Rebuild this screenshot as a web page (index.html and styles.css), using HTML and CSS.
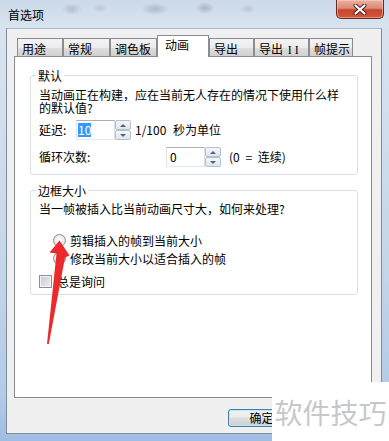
FILE: index.html
```html
<!DOCTYPE html>
<html lang="zh">
<head>
<meta charset="utf-8">
<title>首选项</title>
<link rel="stylesheet" href="styles.css">
</head>
<body>
<div class="window">
  <div class="titlebar">
    <span class="title">首选项</span>
    <div class="close-btn">
      <svg width="16" height="11" viewBox="0 0 16 11">
        <path d="M3.5 1.5 L12.5 9.5 M12.5 1.5 L3.5 9.5" stroke="#4a1e17" stroke-width="4" stroke-linecap="round"/>
        <path d="M3.5 1.5 L12.5 9.5 M12.5 1.5 L3.5 9.5" stroke="#ffffff" stroke-width="2.2" stroke-linecap="round"/>
      </svg>
    </div>
  </div>
  <div class="client">
    <div class="tabs">
      <div class="tab w46">用途</div>
      <div class="tab w47">常规</div>
      <div class="tab w47">调色板</div>
      <div class="tab w52 active">动画</div>
      <div class="tab w45">导出</div>
      <div class="tab w55">导出 <span class="roman">II</span></div>
      <div class="tab w44">帧提示</div>
    </div>
    <div class="panel">
      <fieldset class="group">
        <legend>默认</legend>
        <div class="group-body body-default">
          <p class="desc">当动画正在构建，应在当前无人存在的情况下使用什么样的默认值?</p>
          <div class="field-row">
            <span class="label label-delay">延迟:</span>
            <div class="textbox"><span class="sel">10</span></div>
            <div class="spinner"><span class="spin up"></span><span class="spin down"></span></div>
            <span class="unit">1/100 秒为单位</span>
          </div>
          <div class="field-row row-loop">
            <span class="label label-loop">循环次数:</span>
            <div class="textbox"><span class="value">0</span></div>
            <div class="spinner"><span class="spin up"></span><span class="spin down"></span></div>
            <span class="unit unit-loop">(0 = 连续)</span>
          </div>
        </div>
      </fieldset>
      <fieldset class="group">
        <legend>边框大小</legend>
        <div class="group-body body-frame">
          <p class="desc">当一帧被插入比当前动画尺寸大，如何来处理?</p>
          <div class="options">
            <div class="radio-row"><span class="radio"></span>剪辑插入的帧到当前大小</div>
            <div class="radio-row"><span class="radio"></span>修改当前大小以适合插入的帧</div>
          </div>
          <div class="check-row"><span class="checkbox"></span>总是询问</div>
        </div>
      </fieldset>
    </div>
    <div class="buttons">
      <div class="btn">确定</div>
    </div>
  </div>
  <svg class="arrow" width="389" height="441" viewBox="0 0 389 441">
    <polygon points="59.5,240.5 49.5,252.5 56.5,253.5 47,344 48.8,344 65,257.5 69.5,255.5" fill="#ec2a2c"/>
  </svg>
  <div class="watermark">软件技巧</div>
</div>
</body>
</html>
```

FILE: styles.css
```css
html, body {
  margin: 0;
  padding: 0;
}

body {
  font-family: "Noto Sans CJK SC", "Liberation Sans", sans-serif;
  font-size: 12px;
  color: #000;
  background: #fff;
}

.window {
  position: relative;
  width: 389px;
  height: 441px;
  display: flex;
  flex-direction: column;
  overflow: hidden;
  background: linear-gradient(180deg, #d0dceb 0%, #d8e3ef 8%, #c9d9ea 50%, #b2cbe7 90%, #9fbde2 100%);
}

.titlebar {
  height: 28px;
  display: flex;
  justify-content: space-between;
  align-items: flex-start;
  padding-left: 8px;
  background:
    radial-gradient(ellipse 10px 6px at 72px 9px, rgba(90, 100, 115, 0.25), transparent),
    radial-gradient(ellipse 8px 5px at 100px 8px, rgba(90, 100, 115, 0.18), transparent),
    radial-gradient(ellipse 14px 6px at 155px 9px, rgba(80, 95, 110, 0.28), transparent),
    radial-gradient(ellipse 10px 6px at 205px 8px, rgba(80, 90, 100, 0.3), transparent),
    radial-gradient(ellipse 8px 5px at 248px 9px, rgba(90, 100, 115, 0.2), transparent),
    linear-gradient(180deg, #cbd9e8, #d9e4f0);
}

.title {
  margin-top: 7px;
  line-height: 16px;
  color: #000;
}

.close-btn {
  box-sizing: border-box;
  width: 48px;
  height: 19px;
  margin-right: 5px;
  border: 1px solid #6b2a20;
  border-top: none;
  border-radius: 0 0 5px 5px;
  background: linear-gradient(180deg, #eab0a2 0%, #dc8a75 45%, #c7462d 55%, #d2593a 100%);
  box-shadow: inset 0 0 0 1px rgba(255, 220, 210, 0.45);
  display: flex;
  align-items: center;
  justify-content: center;
}

.client {
  flex: 1;
  margin: 0 7px 7px 6px;
  border: 1px solid #7d8b9b;
  border-top-color: #a8b8c8;
  background: #f0f0f0;
  padding: 6px 9px 0 7px;
  display: flex;
  flex-direction: column;
}

.tabs {
  display: flex;
  align-items: flex-end;
  height: 22px;
  margin: 0 0 -1px 3px;
}

.tab {
  box-sizing: border-box;
  height: 19px;
  border: 1px solid #898c95;
  border-bottom: none;
  background: linear-gradient(180deg, #f3f3f3 0%, #ebebeb 50%, #dddddd 51%, #cfcfcf 100%);
  padding: 2px 0 0 4px;
  line-height: 15px;
  white-space: nowrap;
}

.roman {
  font-family: "Liberation Serif", serif;
  letter-spacing: 3px;
  margin-left: 2px;
}

.tab.active {
  height: 22px;
  background: #fff;
  position: relative;
  z-index: 1;
  padding-top: 1px;
  padding-left: 7px;
}

.w44 { width: 44px; }
.w45 { width: 45px; }
.w46 { width: 46px; }
.w47 { width: 47px; }
.w52 { width: 52px; }
.w55 { width: 55px; }

.panel {
  box-sizing: border-box;
  height: 342px;
  border: 1px solid #898c95;
  background: #fff;
  padding: 12px 13px 0 15px;
}

.group {
  margin: 0;
  padding: 0;
  min-width: 0;
  border: 1px solid #d5dfe5;
  border-radius: 3px;
}

.group + .group {
  margin-top: 9px;
}

legend {
  margin-left: 5px;
  padding: 0 2px;
  line-height: 13px;
}

.group-body {
  padding: 6px 8px 7px 8px;
}

.body-frame {
  padding: 5px 8px 4px 8px;
}

.desc {
  margin: 0;
  line-height: 13px;
}

.field-row {
  display: flex;
  align-items: center;
  height: 20px;
  margin-top: 6px;
}

.row-loop {
  margin-top: 7px;
}

.label {
  line-height: 14px;
}

.label-delay { width: 37px; }
.label-loop { width: 127px; }

.textbox {
  box-sizing: border-box;
  width: 39px;
  height: 20px;
  border: 1px solid #abadb3;
  border-color: #abadb3 #dbdfe6 #e3e9ef #e2e3ea;
  background: #fff;
  display: flex;
  align-items: center;
  padding-left: 1px;
}

.sel {
  background: #3399ff;
  color: #fff;
  line-height: 14px;
}

.value {
  padding-left: 2px;
  line-height: 14px;
}

.spinner {
  display: flex;
  flex-direction: column;
  width: 16px;
  height: 20px;
}

.spin {
  flex: 1;
  box-sizing: border-box;
  border: 1px solid #b6c0cc;
  border-radius: 2px;
  background: linear-gradient(180deg, #f5f7fa, #dfe5ec);
  display: flex;
  align-items: center;
  justify-content: center;
}

.spin.up::before {
  content: "";
  border-left: 3px solid transparent;
  border-right: 3px solid transparent;
  border-bottom: 3px solid #4d6185;
}

.spin.down::before {
  content: "";
  border-left: 3px solid transparent;
  border-right: 3px solid transparent;
  border-top: 3px solid #4d6185;
}

.unit {
  margin-left: 4px;
  word-spacing: 4px;
  line-height: 14px;
}

.unit-loop {
  margin-left: 8px;
  word-spacing: 3px;
}

.options {
  margin-top: 16px;
}

.radio-row {
  display: flex;
  align-items: center;
  height: 18px;
  padding-left: 14px;
}

.radio {
  box-sizing: border-box;
  width: 13px;
  height: 13px;
  border-radius: 50%;
  border: 1px solid #8e8f8f;
  background: radial-gradient(circle at 50% 45%, #ffffff 0%, #f2f2f2 40%, #cfd1d4 100%);
  margin-right: 4px;
}

.check-row {
  display: flex;
  align-items: center;
  height: 18px;
  margin-top: 5px;
}

.checkbox {
  box-sizing: border-box;
  width: 13px;
  height: 13px;
  border: 1px solid #8e8f8f;
  background: linear-gradient(135deg, #c6cad0, #eef0f2);
  box-shadow: inset 0 0 0 1px #f4f4f4;
  margin-right: 5px;
}

.buttons {
  display: flex;
  margin-top: 11px;
  padding-left: 214px;
}

.btn {
  box-sizing: border-box;
  width: 67px;
  height: 18px;
  border: 1px solid #3c7fb1;
  border-radius: 3px;
  background: linear-gradient(180deg, #f2f2f2 0%, #ebebeb 45%, #dddddd 50%, #cfcfcf 100%);
  box-shadow: inset 0 0 0 1px #c4e8f8;
  display: flex;
  align-items: center;
  justify-content: center;
  line-height: 14px;
}

.arrow {
  position: absolute;
  left: 0;
  top: 0;
  pointer-events: none;
}

.watermark {
  position: absolute;
  left: 272px;
  top: 382px;
  width: 117px;
  height: 59px;
  background: #fff;
  color: #c8c8c8;
  font-size: 28px;
  line-height: 1;
  display: flex;
  align-items: center;
  justify-content: center;
  white-space: nowrap;
}
```
